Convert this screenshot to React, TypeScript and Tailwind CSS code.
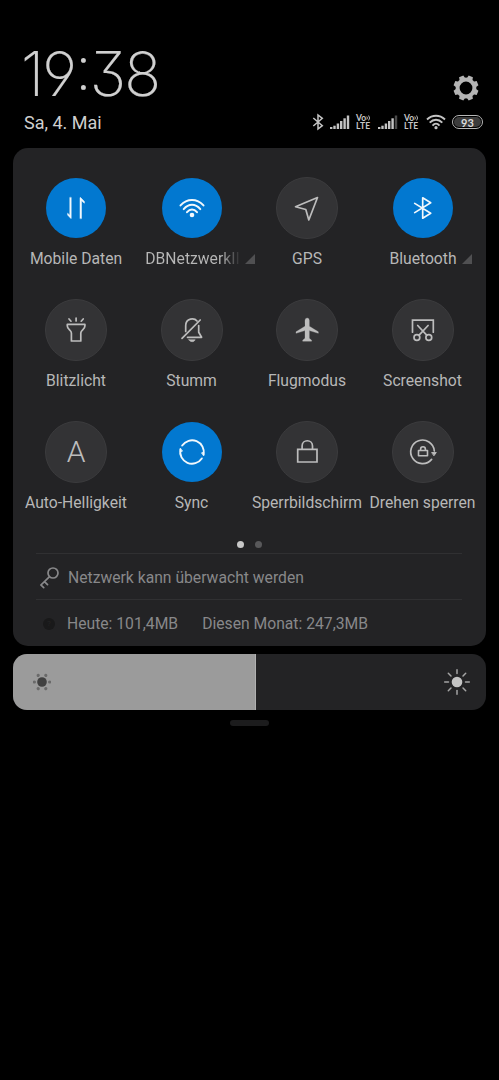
import type { ReactNode } from "react";
import clsx from "clsx";

interface Tile {
  label: string;
  icon: ReactNode;
  active?: boolean;
  expandable?: boolean;
  clipped?: boolean;
}

function Glyph({ children }: { children: ReactNode }) {
  return (
    <svg
      viewBox="-18 -18 36 36"
      className="h-9 w-9"
      fill="none"
      stroke="currentColor"
      strokeWidth="1.7"
      strokeLinecap="round"
      strokeLinejoin="round"
    >
      {children}
    </svg>
  );
}

const tiles: Tile[] = [
  {
    label: "Mobile Daten",
    active: true,
    icon: (
      <Glyph>
        <path d="M-4.8-10.3V10.4H-5.2L-8.4 7V5.2L-6.2 7.2V-10.3ZM4 10.3V-10.4H4.6L8.4-6.6V-4.8L5.5-7.2V10.3Z" fill="currentColor" strokeWidth=".5" />
      </Glyph>
    ),
  },
  {
    label: "DBNetzwerkII",
    active: true,
    expandable: true,
    clipped: true,
    icon: (
      <Glyph>
        <path d="M-11.5-2.6Q-6.5-7.9 0-7.9T11.5-2.6M-8.3 1.1Q-4.5-3.2 0-3.2T8.3 1.1M-5 4.2Q-2.7 1.4 0 1.4T5 4.2" strokeWidth="2" />
        <circle cy="7" r="2.3" fill="currentColor" stroke="none" />
      </Glyph>
    ),
  },
  {
    label: "GPS",
    icon: (
      <Glyph>
        <path d="M10.5-10.5L-11.5-1.3L-1.2 1.5L1.8 12Z" />
      </Glyph>
    ),
  },
  {
    label: "Bluetooth",
    active: true,
    expandable: true,
    icon: (
      <Glyph>
        <path d="M-8.3-4.6L7.7 5.3L-.3 10.2V-10.2L7.7-5.3L-8.3 4.6" />
      </Glyph>
    ),
  },
  {
    label: "Blitzlicht",
    icon: (
      <Glyph>
        <path d="M-8.7-5.7H8.9V-4C8.9-.5 4.8.2 4.8 3V11H-4.6V3C-4.6.2-8.7-.5-8.7-4Z" />
        <path d="M.1-12V-9M-7-11L-5-8.8M7.2-11L5.2-8.8" />
      </Glyph>
    ),
  },
  {
    label: "Stumm",
    icon: (
      <Glyph>
        <path d="M-10 8.3L8.2-10" />
        <path d="M-6.3 1.5V-4.2C-6.3-12.5 2.5-12.2 5-9M6.7-4.5V2.3L9.6 7.3H-4.5" />
        <path d="M-3 9.8H3.2Q2.3 11.7 .1 11.7T-3 9.8Z" fill="currentColor" strokeWidth=".6" />
      </Glyph>
    ),
  },
  {
    label: "Flugmodus",
    icon: (
      <Glyph>
        <path
          d="M-2-9.5Q-2-12 .2-12T2.3-9.5V-3.8L11.3 1.8V3.3L2.3.6V8.3L4.6 10.2V11.2H-4.3V10.2L-2 8.3V.6L-11 3.3V1.8L-2-3.8Z"
          fill="currentColor"
          strokeWidth=".3"
        />
      </Glyph>
    ),
  },
  {
    label: "Screenshot",
    icon: (
      <Glyph>
        <path d="M-10.5 2.2V-9.8H10.3V2.2" strokeLinejoin="miter" />
        <path d="M-5.3-4.5L3.7 5.2M5.1-4.5L-3.9 5.2" />
        <circle cx="-6.1" cy="7.5" r="2.9" />
        <circle cx="5.8" cy="7.5" r="2.9" />
      </Glyph>
    ),
  },
  {
    label: "Auto-Helligkeit",
    icon: <span className="text-[30px] leading-[34px] font-light">A</span>,
  },
  {
    label: "Sync",
    active: true,
    icon: (
      <Glyph>
        <path d="M-9.8-6.4A11.8 11.8 0 0 1 11.6 2.5M9.8 6.4A11.8 11.8 0 0 1-11.6-2.5" strokeWidth="1.9" />
        <path d="M9.6.8L12-.3L11.8 3.6ZM-9.6-.8L-12 .3L-11.8-3.6Z" fill="currentColor" strokeWidth=".6" />
      </Glyph>
    ),
  },
  {
    label: "Sperrbildschirm",
    icon: (
      <Glyph>
        <path d="M-9.3-2.6H10V10H-9.3ZM-4.9-2.6V-6C-4.9-13 5.5-13 5.5-6V-2.6" strokeLinejoin="miter" />
      </Glyph>
    ),
  },
  {
    label: "Drehen sperren",
    icon: (
      <Glyph>
        <path d="M8.6 7.4A11.8 11.8 0 1 1 11.3-1" />
        <path d="M9 .5H13.3L11.1 3.5Z" fill="currentColor" strokeWidth=".9" />
        <path d="M-4.5-1.5H4.5V3.7H-4.5ZM-2.4-1.5V-2.8C-2.4-6 2.4-6 2.4-2.8V-1.5" strokeWidth="1.6" />
      </Glyph>
    ),
  },
];

function QuickTile({ label, icon, active, expandable, clipped }: Tile) {
  return (
    <div className="flex h-[122px] flex-col items-center">
      <div
        className={clsx(
          "flex items-center justify-center rounded-full",
          active
            ? "my-px h-[60px] w-[60px] bg-[#0278d0] text-[#f2f8fc]"
            : "h-[62px] w-[62px] border border-[#3b3b3d] bg-[#333335] text-[#bdbdbd]"
        )}
      >
        {icon}
      </div>
      <div className="mt-[9px] flex items-center justify-center text-[15.7px] leading-[22px] whitespace-nowrap text-[#b7b7b7]">
        {clipped ? (
          <span className="ml-[17px] bg-linear-to-r from-[#b7b7b7] from-80% to-[#2c2c2e] bg-clip-text text-transparent">
            {label}
          </span>
        ) : (
          <span className={expandable ? "ml-4" : ""}>{label}</span>
        )}
        {expandable && (
          <svg viewBox="0 0 10 10" className="ml-[5px] h-2.5 w-2.5" fill="#505052">
            <path d="M10 0V10H0Z" />
          </svg>
        )}
      </div>
    </div>
  );
}

function Signal({ weak }: { weak?: boolean }) {
  return (
    <svg viewBox="0 0 20 15" className="h-[15px] w-5" fill="#c4c4c4">
      <rect x="0" y="12" width="2.4" height="2" />
      <rect x="3.3" y="10.7" width="2.4" height="3.3" />
      <rect x="6.7" y="8.5" width="2.4" height="5.5" />
      <rect x="10" y="6" width="2.4" height="8" />
      <rect x="13.4" y="3.3" width="2.4" height="10.7" />
      <rect x="16.8" y=".5" width="2.4" height="13.5" fill={weak ? "#4a4a4a" : undefined} />
    </svg>
  );
}

function VoLte() {
  return (
    <div className="w-4 font-[Lato] text-[8.5px] leading-[8px] font-bold text-[#c8c8c8]">
      <div className="flex items-center">
        Vo
        <svg viewBox="0 0 5 6" className="h-1.5 w-[5px]" fill="none" stroke="currentColor" strokeWidth=".9">
          <path d="M.8 1.5Q2 3 .8 4.5M2.6 .5Q4.6 3 2.6 5.5" />
        </svg>
      </div>
      <div className="tracking-[0.3px]">LTE</div>
    </div>
  );
}

function GearIcon() {
  return (
    <svg viewBox="-13 -13 26 26" className="h-[26px] w-[26px]" fill="#b4b4b4">
      <circle r="8.4" fill="none" stroke="#b4b4b4" strokeWidth="4" />
      {[22.5, 67.5, 112.5, 157.5, 202.5, 247.5, 292.5, 337.5].map((angle) => (
        <path key={angle} d="M-3.1-9L-2.3-12.5H2.3L3.1-9Z" transform={`rotate(${angle})`} />
      ))}
    </svg>
  );
}

function StatusIcons() {
  return (
    <div className="flex h-4 items-center">
      <svg viewBox="-7 -9 14 18" className="mr-[5px] h-[18px] w-3.5" fill="none" stroke="#c4c4c4" strokeWidth="1.5">
        <path d="M-4.7-4L4.3 3.7L0 7V-7L4.3-3.7L-4.7 4" />
      </svg>
      <Signal />
      <div className="ml-1.5">
        <VoLte />
      </div>
      <div className="ml-1.5">
        <Signal weak />
      </div>
      <div className="ml-1.5">
        <VoLte />
      </div>
      <svg viewBox="-10 -8 20 16" className="ml-1.5 h-4 w-5" fill="none" stroke="#c4c4c4" strokeWidth="1.9">
        <path d="M-9-2.5Q-5-6.2 0-6.2T9-2.5M-6.3.7Q-3.5-2.2 0-2.2T6.3.7M-3.5 3.6Q-1.8 1.6 0 1.6T3.5 3.6" />
        <circle cy="5.7" r="1.6" fill="#c4c4c4" stroke="none" />
      </svg>
      <div className="ml-1.5 flex h-3.5 w-[31px] items-center justify-center rounded-full border-[1.5px] border-[#b8b8b8] p-px">
        <span className="flex h-full w-full items-center justify-center rounded-full bg-[#3c3c3c] font-[Lato] text-[11px] leading-none font-bold text-[#dcdcdc]">
          93
        </span>
      </div>
    </div>
  );
}

export default function App() {
  return (
    <div className="h-[1080px] w-[499px] overflow-hidden bg-black font-[Roboto,sans-serif]">
      <header className="flex h-[148px] justify-between pt-[42px] pr-4 pl-6">
        <div>
          <div className="-ml-[3px] h-[69px] font-[Inter] text-[61px] leading-[64px] font-extralight tracking-[-2px] whitespace-nowrap text-[#d0d0d0] [-webkit-text-stroke:0.2px_#d0d0d0] [font-feature-settings:'cv09','cv04','case']">
            19:38
          </div>
          <div className="text-[18px] leading-6 text-[#cfcfcf]">Sa, 4. Mai</div>
        </div>
        <div className="flex flex-col items-end pt-[33px]">
          <div className="mr-1">
            <GearIcon />
          </div>
          <div className="mt-[13px]">
            <StatusIcons />
          </div>
        </div>
      </header>

      <main className="mx-[13px] h-[498px] rounded-[15px] bg-[#232325] pt-[29px]">
        <div className="ml-[5.25px] grid w-[462px] grid-cols-4">
          {tiles.map((tile) => (
            <QuickTile key={tile.label} {...tile} />
          ))}
        </div>

        {/* Page dots */}
        <div className="flex h-[10px] items-start justify-center gap-[11px]">
          <span className="-mt-0.5 h-[7px] w-[7px] rounded-full bg-[#c8c8c8]" />
          <span className="-mt-0.5 h-[7px] w-[7px] rounded-full bg-[#58585a]" />
        </div>

        {/* Network info */}
        <div className="mr-6 ml-[23px] text-[15.7px] text-[#88888a]">
          <div className="flex h-[46px] items-center border-t border-[#303032] pt-0.5">
            <svg
              viewBox="0 0 20 22"
              className="mr-2 ml-1 h-[22px] w-5"
              fill="none"
              stroke="#88888a"
              strokeWidth="1.7"
              strokeLinecap="round"
            >
              <circle cx="13" cy="6" r="5" />
              <path d="M9.3 9.8L1 18L3.7 20.6M4.5 14.7L7.5 17.7" />
            </svg>
            Netzwerk kann überwacht werden
          </div>
          <div className="flex h-[47px] items-center border-t border-[#303032] pt-px">
            <span className="mr-3 ml-[7px] flex h-3 w-3 items-center justify-center rounded-full bg-[#19191a] text-[8px] text-[#242425]">
              ?
            </span>
            Heute: 101,4MB
            <span className="ml-6">Diesen Monat: 247,3MB</span>
          </div>
        </div>
      </main>

      {/* Brightness */}
      <div className="mx-[13px] mt-2 flex h-14 overflow-hidden rounded-[14px] bg-[#232325]">
        <div className="flex w-[243px] items-center border-r border-[#b0b0b0] bg-[#9b9b9b] pl-5">
          <svg viewBox="-9 -9 18 18" className="h-[18px] w-[18px]" fill="#6a6a6a">
            <circle r="4.8" fill="#404040" />
            {[0, 60, 120, 180, 240, 300].map((angle) => (
              <circle key={angle} cx="7.6" r="1.6" transform={`rotate(${angle})`} />
            ))}
          </svg>
        </div>
        <div className="flex flex-1 items-center justify-end pr-[15px]">
          <svg
            viewBox="-14 -14 28 28"
            className="h-7 w-7"
            stroke="#a4a4a4"
            strokeWidth="1.5"
            strokeLinecap="round"
          >
            <circle r="5.3" fill="#c4c4c4" stroke="none" />
            {[0, 45, 90, 135, 180, 225, 270, 315].map((angle) => (
              <path key={angle} d="M8.5 0H12.3" transform={`rotate(${angle})`} />
            ))}
          </svg>
        </div>
      </div>

      <div className="mx-auto mt-[10px] h-[6px] w-[39px] rounded-full bg-[#1c1c1d]" />
    </div>
  );
}
